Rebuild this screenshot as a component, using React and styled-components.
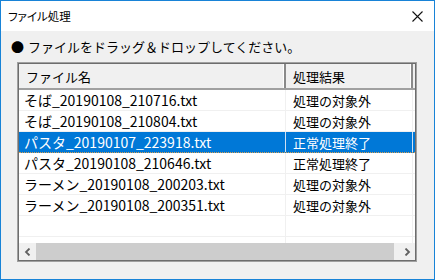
import React from 'react';
import styled, { createGlobalStyle } from 'styled-components';

const GlobalStyle = createGlobalStyle`
  html, body {
    margin: 0;
    padding: 0;
    background: #f0f0f0;
  }
  body {
    font-family: "Noto Sans CJK JP", "Noto Sans", sans-serif;
    color: #000;
  }
`;

const Window = styled.div`
  width: 435px;
  height: 280px;
  box-sizing: border-box;
  border: 1px solid #1883d7;
  display: flex;
  flex-direction: column;
  background: #f0f0f0;
`;

const TitleBar = styled.div`
  height: 30px;
  background: #fff;
  display: flex;
  align-items: center;
  justify-content: space-between;
  padding: 0 11px 0 7px;
  font-size: 11.5px;
  font-feature-settings: "palt";
`;

const Body = styled.div`
  flex: 1;
  display: flex;
  flex-direction: column;
  padding: 6px 0 0 16px;
`;

const Hint = styled.div`
  font-size: 13px;
  height: 25px;
  line-height: 20px;
  margin-left: -6px;
  display: flex;
  gap: 4px;
`;

const ListBox = styled.div`
  width: 400px;
  height: 200px;
  box-sizing: border-box;
  border: 1px solid #a0a0a0;
  background: #fff;
  display: flex;
  flex-direction: column;
`;

const Inner = styled.div`
  flex: 1;
  border: 1px solid #6d6d6d;
  display: flex;
  flex-direction: column;
  overflow: hidden;
`;

const Header = styled.div`
  display: grid;
  grid-template-columns: 267px 127px;
  height: 24px;
  background: #f0f0f0;
  border-bottom: 2px solid #a0a0a0;
  font-size: 13px;
`;

const HeadCell = styled.div`
  display: flex;
  align-items: center;
  padding-left: ${p => p.$pad}px;
  border-right: 2px solid #8a8a8a;
  box-shadow: inset -1px 0 0 #fff;
  box-sizing: border-box;
`;

const Rows = styled.div`
  flex: 1;
  overflow: hidden;
`;

const Row = styled.div`
  display: grid;
  grid-template-columns: 267px 127px;
  height: 21px;
  box-sizing: border-box;
  border-bottom: 1px ${p => (p.$selected ? 'dotted #d9a050' : 'solid #f0f0f0')};
  background: ${p => (p.$selected ? '#0078d7' : '#fff')};
  color: ${p => (p.$selected ? '#fff' : '#000')};
`;

const Cell = styled.div`
  display: flex;
  align-items: center;
  padding-left: ${p => p.$pad}px;
  font-size: ${p => p.$size}px;
  border-right: 1px solid ${p => (p.$selected ? '#cfe0f2' : '#f0f0f0')};
  white-space: nowrap;
  overflow: hidden;
`;

const ScrollBar = styled.div`
  height: 17px;
  display: flex;
  background: #f0f0f0;
`;

const ArrowBtn = styled.div`
  width: 17px;
  height: 17px;
  display: flex;
  align-items: center;
  justify-content: center;
`;

const Track = styled.div`
  flex: 1;
  padding-right: 4px;
  display: flex;
`;

const Thumb = styled.div`
  flex: 1;
  background: #cdcdcd;
`;

const files = [
  ['そば_20190108_210716.txt', '処理の対象外'],
  ['そば_20190108_210804.txt', '処理の対象外'],
  ['パスタ_20190107_223918.txt', '正常処理終了', true],
  ['パスタ_20190108_210646.txt', '正常処理終了'],
  ['ラーメン_20190108_200203.txt', '処理の対象外'],
  ['ラーメン_20190108_200351.txt', '処理の対象外'],
  ['', ''],
  ['', ''],
];

const Chevron = ({ left }) => (
  <svg width="8" height="8" viewBox="0 0 8 8">
    <path
      d={left ? 'M5.5 0.5 L2 4 L5.5 7.5' : 'M2.5 0.5 L6 4 L2.5 7.5'}
      fill="none"
      stroke="#606060"
      strokeWidth="1.8"
    />
  </svg>
);

const App = () => (
  <>
    <GlobalStyle />
    <Window>
      <TitleBar>
        <span>ファイル処理</span>
        <svg width="11" height="11" viewBox="0 0 11 11">
          <path d="M0.5 0.5 L10.5 10.5 M10.5 0.5 L0.5 10.5" stroke="#111" strokeWidth="1.1" />
        </svg>
      </TitleBar>
      <Body>
        <Hint>
          <span>●</span>
          <span>ファイルをドラッグ＆ドロップしてください。</span>
        </Hint>
        <ListBox>
          <Inner>
            <Header>
              <HeadCell $pad={7}>ファイル名</HeadCell>
              <HeadCell $pad={7}>処理結果</HeadCell>
            </Header>
            <Rows>
              {files.map(([name, result, sel], i) => (
                <Row key={i} $selected={sel}>
                  <Cell $pad={5} $size={14} $selected={sel}>{name}</Cell>
                  <Cell $pad={7} $size={13} $selected={sel}>{result}</Cell>
                </Row>
              ))}
            </Rows>
            <ScrollBar>
              <ArrowBtn><Chevron left /></ArrowBtn>
              <Track><Thumb /></Track>
              <ArrowBtn><Chevron /></ArrowBtn>
            </ScrollBar>
          </Inner>
        </ListBox>
      </Body>
    </Window>
  </>
);

export default App;
